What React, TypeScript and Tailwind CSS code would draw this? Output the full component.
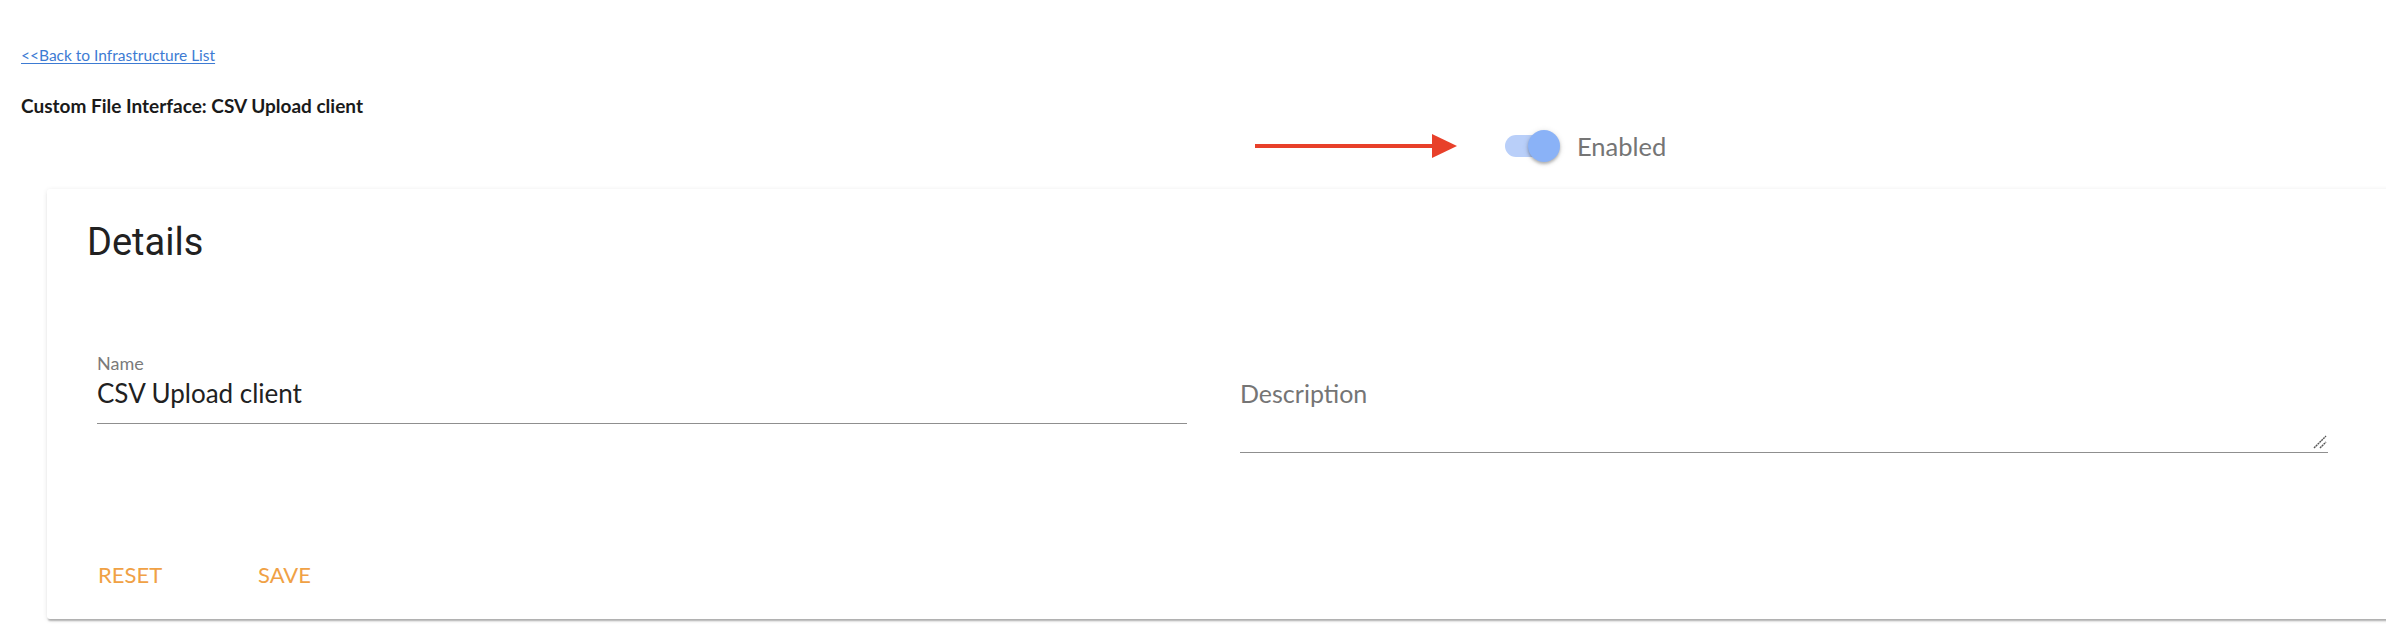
import React from "react";

export default function App() {
  return (
    <div className="w-[2386px] h-[640px] overflow-hidden bg-white pl-[21px] pt-[45px] font-['Lato',sans-serif]">
      <a href="#" className="block w-fit text-[15.5px] leading-[20px] text-[#3d7bd3] underline decoration-1 underline-offset-2">
        &lt;&lt;Back to Infrastructure List
      </a>
      <div className="mt-[30px] text-[19px] leading-[22px] font-bold text-[#1a1a1a]">
        Custom File Interface: CSV Upload client
      </div>

      <div className="mt-[9px] h-[40px] flex items-center">
        <svg className="ml-[1234px]" width="204" height="26" viewBox="0 0 204 26">
          <rect x="0" y="11" width="180" height="4" fill="#e8402a" />
          <polygon points="177,1 202,13 177,25" fill="#e8402a" />
        </svg>
        <div className="relative ml-[46px] w-[56px] h-[32px]">
          <div className="absolute left-0 top-[5px] w-[50px] h-[22px] rounded-full bg-[#b9cff9]" />
          <div className="absolute left-[23px] top-0 w-[32px] h-[32px] rounded-full bg-[#8ab2f7] shadow-[0_2px_3px_rgba(0,0,0,0.25),0_1px_6px_rgba(0,0,0,0.12)]" />
        </div>
        <span className="ml-[16px] text-[25.5px] leading-[30px] text-[#757575]">Enabled</span>
      </div>

      <div className="ml-[26px] mt-[23px] w-[2420px] h-[430px] bg-white rounded-[3px] shadow-[0_3px_2px_-1px_rgba(0,0,0,0.28),0_1px_5px_0_rgba(0,0,0,0.1)] pt-[31px] pl-[40px]">
        <h2 className="font-['Roboto',sans-serif] text-[38px] leading-[44px] text-[#212121]">Details</h2>

        <div className="mt-[90px] pl-[10px] flex items-start">
          <div className="w-[1090px] border-b border-[#8f8f8f] pb-[15px]">
            <div className="text-[18px] leading-[18px] text-[#7a7a7a]">Name</div>
            <div className="mt-[6px] text-[26px] leading-[30px] text-[#212121]">CSV Upload client</div>
          </div>
          <div className="relative ml-[53px] w-[1088px] border-b border-[#8f8f8f] pt-[25px] pb-[44px]">
            <div className="text-[25px] leading-[29px] text-[#757575]">Description</div>
            <svg className="absolute right-[1px] bottom-[3px]" width="14" height="14" viewBox="0 0 14 14">
              <line x1="1" y1="13" x2="13" y2="1" stroke="#555" strokeWidth="1.4" strokeDasharray="2 0.6" />
              <line x1="7" y1="13" x2="13" y2="7" stroke="#555" strokeWidth="1.4" strokeDasharray="2 0.6" />
            </svg>
          </div>
        </div>

        <div className="mt-[109px] pl-[11px] flex">
          <button className="w-[160px] text-left text-[22px] leading-[25px] text-[#f0a145] uppercase">Reset</button>
          <button className="text-left text-[22px] leading-[25px] text-[#f0a145] uppercase">Save</button>
        </div>
      </div>
    </div>
  );
}
